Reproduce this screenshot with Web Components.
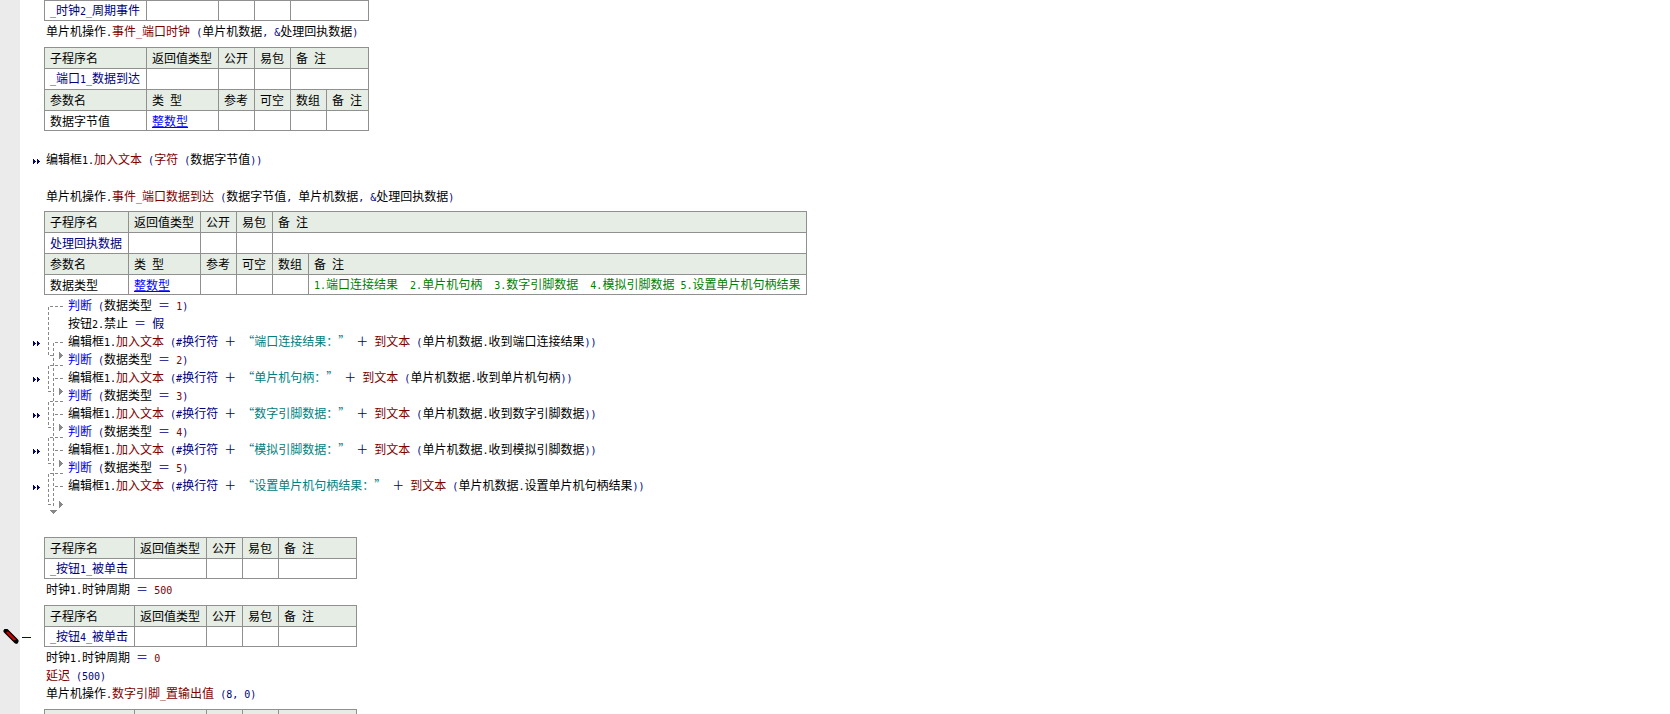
<!DOCTYPE html>
<html lang="zh-CN">
<head>
<meta charset="utf-8">
<title>单片机操作</title>
<style>
html,body{margin:0;padding:0;height:100%;overflow:hidden;background:#fff}
</style>
</head>
<body>
<e-doc>
<e-table cols="102px 72px 36px 36px 78px">
<e-row><e-cell><e-t k="n">_时钟2_周期事件</e-t></e-cell><e-cell></e-cell><e-cell></e-cell><e-cell></e-cell><e-cell></e-cell></e-row>
</e-table>
<e-line style="margin-top:2px"><e-t>单片机操作.</e-t><e-t k="r">事件_端口时钟</e-t><e-t k="n"> (</e-t><e-t>单片机数据</e-t><e-t k="n">, &amp;</e-t><e-t>处理回执数据</e-t><e-t k="n">)</e-t></e-line>
<e-table style="margin-top:6px" cols="102px 72px 36px 36px 36px 42px">
<e-row head><e-cell>子程序名</e-cell><e-cell>返回值类型</e-cell><e-cell>公开</e-cell><e-cell>易包</e-cell><e-cell span="2">备 注</e-cell></e-row>
<e-row><e-cell><e-t k="n">_端口1_数据到达</e-t></e-cell><e-cell></e-cell><e-cell></e-cell><e-cell></e-cell><e-cell span="2"></e-cell></e-row>
<e-row head><e-cell>参数名</e-cell><e-cell>类 型</e-cell><e-cell>参考</e-cell><e-cell>可空</e-cell><e-cell>数组</e-cell><e-cell>备 注</e-cell></e-row>
<e-row><e-cell>数据字节值</e-cell><e-cell><e-t k="u">整数型</e-t></e-cell><e-cell></e-cell><e-cell></e-cell><e-cell></e-cell><e-cell></e-cell></e-row>
</e-table>
<e-line mark style="margin-top:20px"><e-t>编辑框1.</e-t><e-t k="r">加入文本</e-t><e-t k="n"> (</e-t><e-t k="r">字符</e-t><e-t k="n"> (</e-t><e-t>数据字节值</e-t><e-t k="n">))</e-t></e-line>
<e-line style="margin-top:19px"><e-t>单片机操作.</e-t><e-t k="r">事件_端口数据到达</e-t><e-t k="n"> (</e-t><e-t>数据字节值</e-t><e-t k="n">, </e-t><e-t>单片机数据</e-t><e-t k="n">, &amp;</e-t><e-t>处理回执数据</e-t><e-t k="n">)</e-t></e-line>
<e-table style="margin-top:5px" cols="84px 72px 36px 36px 36px 498px">
<e-row head><e-cell>子程序名</e-cell><e-cell>返回值类型</e-cell><e-cell>公开</e-cell><e-cell>易包</e-cell><e-cell span="2">备 注</e-cell></e-row>
<e-row><e-cell><e-t k="n">处理回执数据</e-t></e-cell><e-cell></e-cell><e-cell></e-cell><e-cell></e-cell><e-cell span="2"></e-cell></e-row>
<e-row head><e-cell>参数名</e-cell><e-cell>类 型</e-cell><e-cell>参考</e-cell><e-cell>可空</e-cell><e-cell>数组</e-cell><e-cell>备 注</e-cell></e-row>
<e-row><e-cell>数据类型</e-cell><e-cell><e-t k="u">整数型</e-t></e-cell><e-cell></e-cell><e-cell></e-cell><e-cell></e-cell><e-cell><e-t k="g">1.端口连接结果  2.单片机句柄  3.数字引脚数据  4.模拟引脚数据 5.设置单片机句柄结果</e-t></e-cell></e-row>
</e-table>
<e-tree style="margin-top:2px">
<e-line in><e-t k="b">判断</e-t><e-t k="n"> (</e-t><e-t>数据类型</e-t><e-t k="n"> ＝ </e-t><e-t k="r">1</e-t><e-t k="n">)</e-t></e-line>
<e-line in><e-t>按钮2.禁止</e-t><e-t k="n"> ＝ 假</e-t></e-line>
<e-line in mark><e-t>编辑框1.</e-t><e-t k="r">加入文本</e-t><e-t k="n"> (#换行符 ＋ </e-t><e-t k="t">“端口连接结果：”</e-t><e-t k="n"> ＋ </e-t><e-t k="r">到文本</e-t><e-t k="n"> (</e-t><e-t>单片机数据.收到端口连接结果</e-t><e-t k="n">))</e-t></e-line>
<e-line in><e-t k="b">判断</e-t><e-t k="n"> (</e-t><e-t>数据类型</e-t><e-t k="n"> ＝ </e-t><e-t k="r">2</e-t><e-t k="n">)</e-t></e-line>
<e-line in mark><e-t>编辑框1.</e-t><e-t k="r">加入文本</e-t><e-t k="n"> (#换行符 ＋ </e-t><e-t k="t">“单片机句柄：”</e-t><e-t k="n"> ＋ </e-t><e-t k="r">到文本</e-t><e-t k="n"> (</e-t><e-t>单片机数据.收到单片机句柄</e-t><e-t k="n">))</e-t></e-line>
<e-line in><e-t k="b">判断</e-t><e-t k="n"> (</e-t><e-t>数据类型</e-t><e-t k="n"> ＝ </e-t><e-t k="r">3</e-t><e-t k="n">)</e-t></e-line>
<e-line in mark><e-t>编辑框1.</e-t><e-t k="r">加入文本</e-t><e-t k="n"> (#换行符 ＋ </e-t><e-t k="t">“数字引脚数据：”</e-t><e-t k="n"> ＋ </e-t><e-t k="r">到文本</e-t><e-t k="n"> (</e-t><e-t>单片机数据.收到数字引脚数据</e-t><e-t k="n">))</e-t></e-line>
<e-line in><e-t k="b">判断</e-t><e-t k="n"> (</e-t><e-t>数据类型</e-t><e-t k="n"> ＝ </e-t><e-t k="r">4</e-t><e-t k="n">)</e-t></e-line>
<e-line in mark><e-t>编辑框1.</e-t><e-t k="r">加入文本</e-t><e-t k="n"> (#换行符 ＋ </e-t><e-t k="t">“模拟引脚数据：”</e-t><e-t k="n"> ＋ </e-t><e-t k="r">到文本</e-t><e-t k="n"> (</e-t><e-t>单片机数据.收到模拟引脚数据</e-t><e-t k="n">))</e-t></e-line>
<e-line in><e-t k="b">判断</e-t><e-t k="n"> (</e-t><e-t>数据类型</e-t><e-t k="n"> ＝ </e-t><e-t k="r">5</e-t><e-t k="n">)</e-t></e-line>
<e-line in mark><e-t>编辑框1.</e-t><e-t k="r">加入文本</e-t><e-t k="n"> (#换行符 ＋ </e-t><e-t k="t">“设置单片机句柄结果：”</e-t><e-t k="n"> ＋ </e-t><e-t k="r">到文本</e-t><e-t k="n"> (</e-t><e-t>单片机数据.设置单片机句柄结果</e-t><e-t k="n">))</e-t></e-line>
<e-line in></e-line>
</e-tree>
<e-table style="margin-top:24px" cols="90px 72px 36px 36px 78px">
<e-row head><e-cell>子程序名</e-cell><e-cell>返回值类型</e-cell><e-cell>公开</e-cell><e-cell>易包</e-cell><e-cell>备 注</e-cell></e-row>
<e-row><e-cell><e-t k="n">_按钮1_被单击</e-t></e-cell><e-cell></e-cell><e-cell></e-cell><e-cell></e-cell><e-cell></e-cell></e-row>
</e-table>
<e-line style="margin-top:2px"><e-t>时钟1.时钟周期</e-t><e-t k="n"> ＝ </e-t><e-t k="r">500</e-t></e-line>
<e-table style="margin-top:6px" cols="90px 72px 36px 36px 78px" breakpoint>
<e-row head><e-cell>子程序名</e-cell><e-cell>返回值类型</e-cell><e-cell>公开</e-cell><e-cell>易包</e-cell><e-cell>备 注</e-cell></e-row>
<e-row><e-cell><e-t k="n">_按钮4_被单击</e-t></e-cell><e-cell></e-cell><e-cell></e-cell><e-cell></e-cell><e-cell></e-cell></e-row>
</e-table>
<e-line style="margin-top:2px"><e-t>时钟1.时钟周期</e-t><e-t k="n"> ＝ </e-t><e-t k="r">0</e-t></e-line>
<e-line><e-t k="r">延迟</e-t><e-t k="n"> (500)</e-t></e-line>
<e-line><e-t>单片机操作.</e-t><e-t k="r">数字引脚_置输出值</e-t><e-t k="n"> (8, 0)</e-t></e-line>
<e-table style="margin-top:6px" cols="90px 72px 36px 36px 78px">
<e-row head><e-cell>子程序名</e-cell><e-cell>返回值类型</e-cell><e-cell>公开</e-cell><e-cell>易包</e-cell><e-cell>备 注</e-cell></e-row>
</e-table>
</e-doc>
<script>
const NARROW = '::slotted(span){font-family:"DejaVu Sans Mono",monospace;font-size:10px;white-space:pre}';
function narrowText(el){
  [...el.childNodes].forEach(n=>{
    if(n.nodeType!==3) return;
    const parts=n.textContent.split(/([\x20-\x7e]+)/).filter(Boolean);
    const f=document.createDocumentFragment();
    parts.forEach(p=>{
      if(/^[\x20-\x7e]/.test(p)){const s=document.createElement('span');s.textContent=p;f.appendChild(s);}
      else f.appendChild(document.createTextNode(p));
    });
    n.replaceWith(f);
  });
}
class Base extends HTMLElement{
  constructor(){super();this.attachShadow({mode:'open'});this.shadowRoot.innerHTML='<style>'+this.constructor.css+'</style>'+this.constructor.html;}
}
class EDoc extends Base{
  static css=':host{display:grid;grid-template-columns:20px 1fr;height:100vh;overflow:hidden;background:#fff;color:#000;font:12px/18px "Noto Sans CJK SC","Noto Sans",sans-serif;text-spacing-trim:space-all;text-autospace:no-autospace;font-kerning:none;font-feature-settings:"palt" 0,"kern" 0}.gutter{background:#ebebeb}.body{min-width:0;overflow:visible}';
  static html='<div class="gutter"></div><div class="body"><slot></slot></div>';
}
class ET extends Base{
  static css=':host{white-space:pre}:host([k=r]){color:#800000}:host([k=n]){color:#000080}:host([k=t]){color:#008080}:host([k=b]){color:#0000ff}:host([k=g]){color:#008000}:host([k=u]){color:#0000ff;text-decoration:underline}'+NARROW;
  static html='<slot></slot>';
  connectedCallback(){narrowText(this);}
}
class ELine extends Base{
  static css=':host{display:flex;height:18px;line-height:18px;white-space:pre;align-items:center}.m{flex:none;width:26px;height:18px;display:flex;align-items:center;padding-top:2px;box-sizing:border-box}.m svg{margin-left:13px;visibility:hidden}:host([mark]) .m svg{visibility:visible}.c{padding-left:0;display:block;height:18px;line-height:16px}:host([in]) .c{padding-left:22px}';
  static html='<div class="m"><svg width="7" height="5" viewBox="0 0 7 5" shape-rendering="crispEdges"><path fill="#000080" d="M0 0h1v1h1v1h1v1h-1v1h-1v1h-1zM4 0h1v1h1v1h1v1h-1v1h-1v1h-1z"/></svg></div><div class="c"><slot></slot></div>';
}
class ETree extends Base{
  static css=':host{display:block;position:relative}svg{position:absolute;left:0;top:0;pointer-events:none}';
  static html=`<slot></slot><svg width="50" height="225" viewBox="20 297 50 225" shape-rendering="crispEdges">
  <g fill="none" stroke="#888" stroke-width="1" stroke-dasharray="3 2">
    <path d="M63 306.5H48.5V355.5H54"/>
    <path d="M63 365.5H48.5V391.5H54"/>
    <path d="M63 401.5H48.5V427.5H54"/>
    <path d="M63 437.5H48.5V463.5H54"/>
    <path d="M63 473.5H48.5V504.5H54"/>
    <path d="M63 342.5H53.5V508"/>
    <path d="M63 378.5H54M63 414.5H54M63 450.5H54M63 486.5H54"/>
  </g>
  <g fill="#888">
    <path d="M59 351l4 4.5l-4 4.5z"/><path d="M59 387l4 4.5l-4 4.5z"/><path d="M59 423l4 4.5l-4 4.5z"/><path d="M59 459l4 4.5l-4 4.5z"/><path d="M59 500l4 4.5l-4 4.5z"/>
    <path d="M50 510h7l-3.5 4.5z"/>
  </g></svg>`;
}
class ETable extends Base{
  static css=':host{display:block;position:relative;width:fit-content;margin-left:24px;border-right:1px solid #909090;border-bottom:1px solid #909090}.bp{position:absolute;left:-41px;top:24px;display:flex;align-items:flex-start}';
  static html='<slot></slot>';
  connectedCallback(){
    this.style.setProperty('--cols',this.getAttribute('cols'));
    if(this.hasAttribute('breakpoint')&&!this.shadowRoot.querySelector('.bp')){
      const d=document.createElement('div');d.className='bp';
      d.innerHTML='<svg width="30" height="16" viewBox="0 0 30 16"><path d="M3 2L13 12" stroke="#000" stroke-width="5" stroke-linecap="round"/><path d="M4 3L12.5 11.5" stroke="#d00000" stroke-width="2.4"/><path d="M12 10.5L15 13.5L14 15L11 12z" fill="#000"/><path d="M19 8.5h9" stroke="#000080" stroke-width="1" shape-rendering="crispEdges"/></svg>';
      this.shadowRoot.appendChild(d);
    }
  }
}
class ERow extends Base{
  static css=':host{display:grid;grid-template-columns:var(--cols);height:21px}:host(:last-child){height:20px}:host([head]){background:#e6ede5}';
  static html='<slot></slot>';
}
class ECell extends Base{
  static css=':host{display:flex;align-items:center;box-sizing:border-box;min-width:0;border-left:1px solid #909090;border-top:1px solid #909090;padding-left:5px;white-space:pre;overflow:hidden}:host([span="2"]){grid-column:span 2}'+NARROW;
  static html='<slot></slot>';
  connectedCallback(){narrowText(this);}
}
customElements.define('e-t',ET);
customElements.define('e-cell',ECell);
customElements.define('e-row',ERow);
customElements.define('e-line',ELine);
customElements.define('e-tree',ETree);
customElements.define('e-table',ETable);
customElements.define('e-doc',EDoc);
</script>
</body>
</html>
